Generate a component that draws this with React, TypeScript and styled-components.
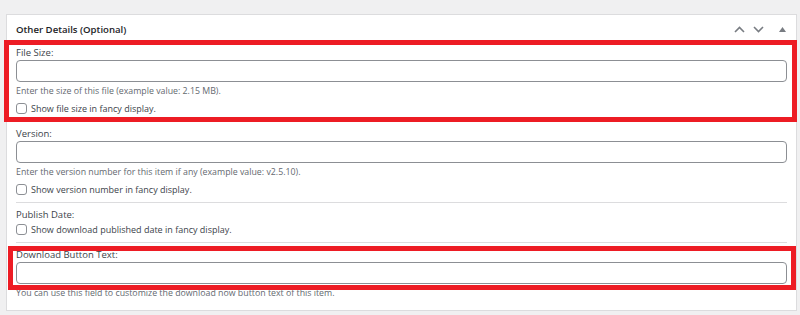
import styled, { createGlobalStyle } from "styled-components";

const GlobalStyle = createGlobalStyle`
  body {
    margin: 0;
    background: #f0f0f1;
    font-family: "Open Sans", "Noto Sans", sans-serif;
    color: #3c434a;
  }
`;

const Page = styled.div`
  padding: 14px 3px 0 6px;
  height: 315px;
  box-sizing: border-box;
`;

const Panel = styled.div`
  background: #fff;
  border: 1px solid #dcdcde;
`;

const Header = styled.div`
  height: 22px;
  display: flex;
  align-items: center;
  justify-content: space-between;
  padding: 3px 10px 0 9px;
  border-bottom: 1px solid #dcdcde;
`;

const Title = styled.h2`
  margin: 0;
  font-size: 9.6px;
  font-weight: 600;
  color: #1d2327;
`;

const Actions = styled.div`
  display: flex;
  align-items: center;
  gap: 8px;
`;

const ActionIcon = styled.svg<{ $gap?: number }>`
  display: block;
  margin-left: ${(p) => p.$gap ?? 0}px;
`;

const Body = styled.div`
  padding: 0 9px;
`;

const Field = styled.div<{ $last?: boolean }>`
  position: relative;
  padding: 6px 0 ${(p) => (p.$last ? 12 : 6)}px;
  border-bottom: ${(p) => (p.$last ? "none" : "1px solid #dcdcde")};
`;

const Framed = styled.div<{ $t: number; $r: number; $b: number; $l: number }>`
  position: relative;
  &::after {
    content: "";
    position: absolute;
    top: ${(p) => p.$t}px;
    right: ${(p) => p.$r}px;
    bottom: ${(p) => p.$b}px;
    left: ${(p) => p.$l}px;
    border: 5px solid #ed1c24;
    box-sizing: border-box;
    z-index: 2;
    pointer-events: none;
  }
`;

const Label = styled.label`
  display: block;
  font-size: 9.5px;
  line-height: 12px;
  margin-bottom: 1px;
  font-weight: 500;
`;

const Input = styled.input`
  display: block;
  width: 100%;
  height: 22px;
  box-sizing: border-box;
  border: 1px solid #8c8f94;
  border-radius: 4px;
  margin: 0;
  background: #fff;
`;

const Help = styled.p`
  margin: 4px 0 0;
  font-size: 8.8px;
  line-height: 10px;
  color: #646970;
`;

const CheckRow = styled.label<{ $top: number }>`
  display: flex;
  align-items: center;
  gap: 4px;
  margin-top: ${(p) => p.$top}px;
  height: 13px;
  font-size: 9px;
  color: #3c434a;
`;

const Box = styled.span`
  width: 11px;
  height: 11px;
  box-sizing: border-box;
  border: 1px solid #8c8f94;
  border-radius: 3px;
  background: #fff;
  flex: none;
`;

function Chevron({ down }: { down?: boolean }) {
  return (
    <ActionIcon width="11" height="7" viewBox="0 0 11 7">
      <polyline
        points={down ? "1,1 5.5,5.5 10,1" : "1,6 5.5,1.5 10,6"}
        fill="none"
        stroke="#787c82"
        strokeWidth="1.6"
      />
    </ActionIcon>
  );
}

export default function App() {
  return (
    <>
      <GlobalStyle />
      <Page>
        <Panel>
          <Header>
            <Title>Other Details (Optional)</Title>
            <Actions>
              <Chevron />
              <Chevron down />
              <ActionIcon $gap={7} width="7" height="5" viewBox="0 0 7 5">
                <polygon points="3.5,0 7,5 0,5" fill="#787c82" />
              </ActionIcon>
            </Actions>
          </Header>
          <Body>
            <Framed $t={-1} $r={-10} $b={0} $l={-12}>
              <Field>
                <Label>File Size:</Label>
                <Input />
                <Help>Enter the size of this file (example value: 2.15 MB).</Help>
                <CheckRow $top={6}>
                  <Box />
                  Show file size in fancy display.
                </CheckRow>
              </Field>
            </Framed>
            <Field>
              <Label>Version:</Label>
              <Input />
              <Help>Enter the version number for this item if any (example value: v2.5.10).</Help>
              <CheckRow $top={6}>
                <Box />
                Show version number in fancy display.
              </CheckRow>
            </Field>
            <Field>
              <Label>Publish Date:</Label>
              <CheckRow $top={2}>
                <Box />
                Show download published date in fancy display.
              </CheckRow>
            </Field>
            <Field $last>
              <Framed $t={-3} $r={-9} $b={-6} $l={-8}>
                <Label>Download Button Text:</Label>
                <Input />
              </Framed>
              <Help>You can use this field to customize the download now button text of this item.</Help>
            </Field>
          </Body>
        </Panel>
      </Page>
    </>
  );
}
